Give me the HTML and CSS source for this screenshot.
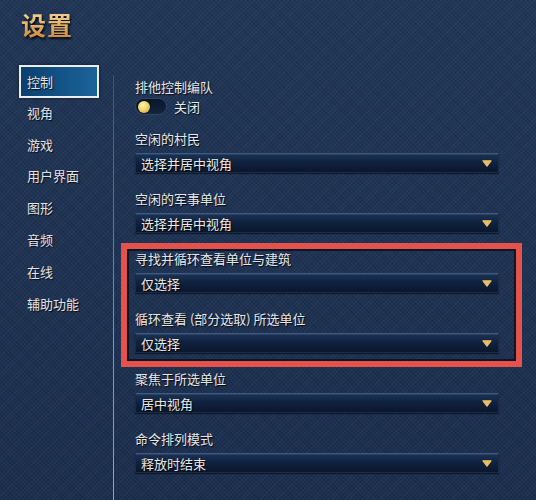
FILE: index.html
```html
<!DOCTYPE html>
<html lang="zh-CN">
<head>
<meta charset="utf-8">
<title>设置</title>
<link rel="stylesheet" href="styles.css">
</head>
<body>
<div class="page">
  <h1 class="title">设置</h1>
  <div class="main">
    <nav class="sidebar">
      <div class="nav-item active">控制</div>
      <div class="nav-item">视角</div>
      <div class="nav-item">游戏</div>
      <div class="nav-item">用户界面</div>
      <div class="nav-item">图形</div>
      <div class="nav-item">音频</div>
      <div class="nav-item">在线</div>
      <div class="nav-item">辅助功能</div>
    </nav>
    <section class="content">
      <div class="field toggle-field">
        <div class="label">排他控制编队</div>
        <div class="toggle-row">
          <span class="toggle"><span class="knob"></span></span>
          <span class="toggle-text">关闭</span>
        </div>
      </div>
      <div class="field">
        <div class="label">空闲的村民</div>
        <div class="select"><span>选择并居中视角</span><svg class="arrow" viewBox="0 0 10 7"><path d="M1 0.8 H9 L5 6.2 Z"/></svg></div>
      </div>
      <div class="field last">
        <div class="label">空闲的军事单位</div>
        <div class="select"><span>选择并居中视角</span><svg class="arrow" viewBox="0 0 10 7"><path d="M1 0.8 H9 L5 6.2 Z"/></svg></div>
      </div>
      <div class="highlight">
        <div class="field">
          <div class="label">寻找并循环查看单位与建筑</div>
          <div class="select"><span>仅选择</span><svg class="arrow" viewBox="0 0 10 7"><path d="M1 0.8 H9 L5 6.2 Z"/></svg></div>
        </div>
        <div class="field last">
          <div class="label">循环查看 (部分选取) 所选单位</div>
          <div class="select"><span>仅选择</span><svg class="arrow" viewBox="0 0 10 7"><path d="M1 0.8 H9 L5 6.2 Z"/></svg></div>
        </div>
      </div>
      <div class="field">
        <div class="label">聚焦于所选单位</div>
        <div class="select"><span>居中视角</span><svg class="arrow" viewBox="0 0 10 7"><path d="M1 0.8 H9 L5 6.2 Z"/></svg></div>
      </div>
      <div class="field">
        <div class="label">命令排列模式</div>
        <div class="select"><span>释放时结束</span><svg class="arrow" viewBox="0 0 10 7"><path d="M1 0.8 H9 L5 6.2 Z"/></svg></div>
      </div>
    </section>
  </div>
</div>
</body>
</html>
```

FILE: styles.css
```css
html, body {
  margin: 0;
  padding: 0;
}
body {
  width: 536px;
  height: 500px;
  overflow: hidden;
  font-family: "Noto Sans CJK SC", "Noto Sans", "Liberation Sans", sans-serif;
  color: #e4e6ea;
  background-color: #1e3253;
  background-image:
    repeating-linear-gradient(45deg, rgba(0,0,0,0.10) 0 1px, transparent 1px 3px),
    repeating-linear-gradient(-45deg, rgba(255,255,255,0.03) 0 1px, transparent 1px 3px),
    linear-gradient(180deg, #213758 0%, #1c2f4f 100%);
}
.page {
  height: 500px;
}
.title {
  margin: 0;
  padding: 9px 0 0 21px;
  height: 31px;
  font-size: 25px;
  line-height: 30px;
  font-weight: 700;
  letter-spacing: 1px;
  color: transparent;
  background: linear-gradient(180deg, #f8e6bc 0%, #ecc47e 45%, #cf8436 100%);
  -webkit-background-clip: text;
  background-clip: text;
  width: 56px;
  filter: drop-shadow(1px 2px 1px rgba(0,0,0,0.85));
}
.main {
  display: flex;
  margin-top: 25px;
}
.sidebar {
  flex: none;
  width: 80px;
  margin-left: 19px;
}
.nav-item {
  height: 31.8px;
  display: flex;
  align-items: center;
  padding: 0 0 3px 8px;
  box-sizing: border-box;
  font-size: 13px;
  color: #e2e4e8;
  text-shadow: 1px 1px 1px rgba(0,0,0,0.8);
}
.nav-item.active {
  height: 33px;
  padding: 0 0 0 6px;
  border: 2px solid #e9eef3;
  background: linear-gradient(90deg, #0b3f6e 0%, #145487 55%, #1b6498 100%);
  box-shadow: 0 0 3px rgba(0,0,0,0.6);
}
.content {
  flex: none;
  width: 364px;
  margin-left: 14px;
  margin-top: 10px;
  height: 425px;
  padding: 4px 0 0 21px;
  border-left: 1px solid #b07a3a;
  border-image: linear-gradient(180deg, #3d5272 0%, #6f6a5a 25%, #c48a3c 60%, #d89444 100%) 1;
}
.field {
  margin-bottom: 18px;
}
.field.last {
  margin-bottom: 0;
}
.label {
  height: 16px;
  line-height: 16px;
  margin-bottom: 6px;
  font-size: 13px;
  color: #e6e8ec;
  text-shadow: 1px 1px 1px rgba(0,0,0,0.85);
  white-space: nowrap;
}
.toggle-field {
  margin-bottom: 16px;
}
.toggle-field .label {
  margin-bottom: 3px;
}
.toggle-row {
  display: flex;
  align-items: center;
  height: 17px;
}
.toggle {
  width: 32px;
  height: 17px;
  box-sizing: border-box;
  border-radius: 9px;
  background: linear-gradient(180deg, #0a1526 0%, #132541 100%);
  border: 1px solid #2d4668;
  display: flex;
  align-items: center;
  padding-left: 2px;
}
.knob {
  width: 12px;
  height: 12px;
  border-radius: 50%;
  background: radial-gradient(circle at 40% 35%, #fff3b0 0%, #f3d56a 45%, #c9992e 100%);
  box-shadow: 0 0 2px rgba(0,0,0,0.7);
}
.toggle-text {
  margin-left: 7px;
  font-size: 13px;
  color: #e6e8ec;
  text-shadow: 1px 1px 1px rgba(0,0,0,0.85);
}
.select {
  height: 20px;
  box-sizing: border-box;
  display: flex;
  align-items: center;
  justify-content: space-between;
  padding: 0 6px 0 5px;
  background: linear-gradient(180deg, #1c3254 0%, #102240 45%, #0a172d 100%);
  border: 1px solid #1a2c48;
  border-top-color: #3c5a82;
  box-shadow: 0 1px 1px rgba(0,0,0,0.5), inset 0 1px 0 rgba(120,160,210,0.15);
  font-size: 13px;
  color: #eceae4;
  text-shadow: 1px 1px 1px rgba(0,0,0,0.9);
}
.arrow {
  width: 10px;
  height: 7px;
}
.arrow path {
  fill: #ecbf62;
  stroke: #ecbf62;
  stroke-width: 1.2;
  stroke-linejoin: round;
}
.highlight {
  margin: 10px -23px 4px -14px;
  border: 6px solid #e5524b;
  padding: 2px 17px 8px 8px;
  box-shadow: inset 0 0 0 2px #0d1626;
}
```
